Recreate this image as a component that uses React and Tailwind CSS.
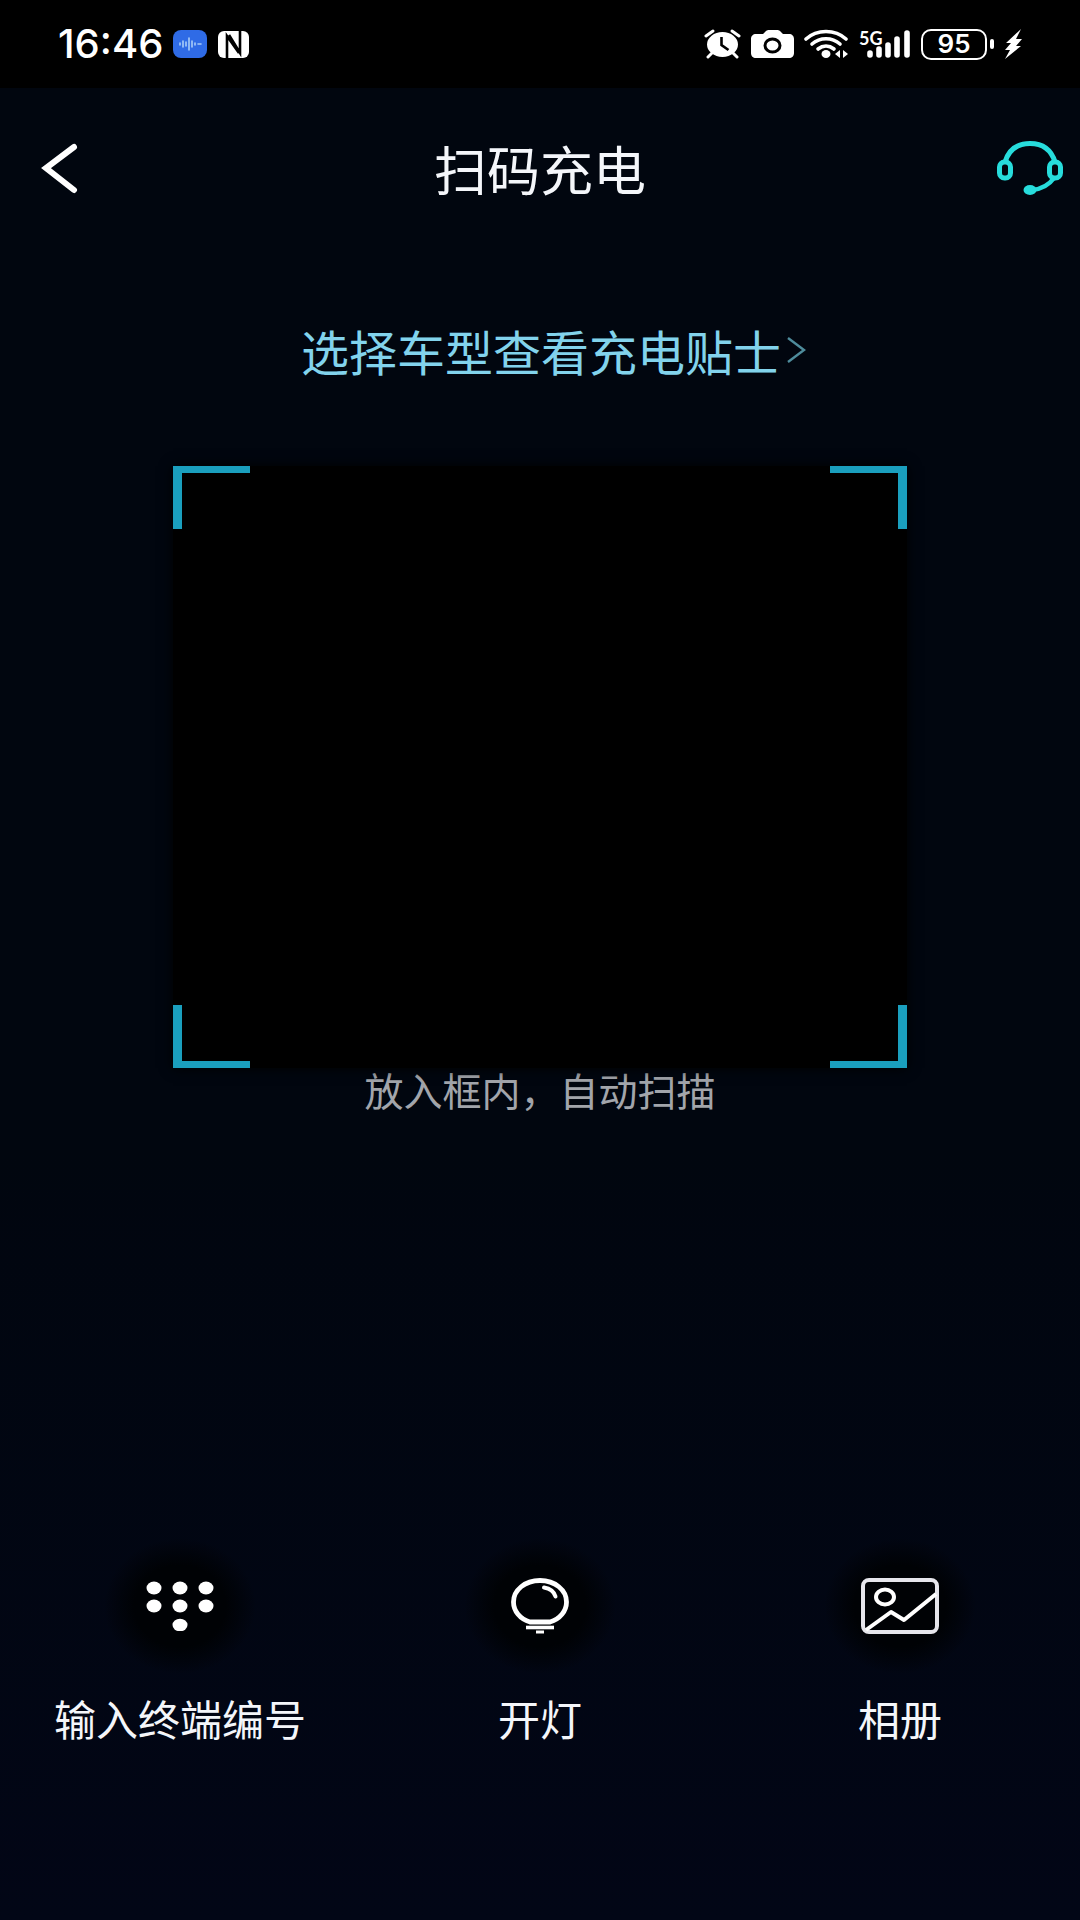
import React, { useState } from 'react';

const StatusBar = () => (
  <div className="flex h-[88px] items-center justify-between bg-black px-[58px] text-white">
    <div className="flex items-center gap-[10px]">
      <span className="font-['Inter',sans-serif] text-[40px] leading-[48px] font-medium">16:46</span>
      <svg width="34" height="28" viewBox="0 0 34 28" aria-hidden="true">
        <rect width="34" height="28" rx="8" fill="#2f6be6" />
        <g stroke="#a9cdf8" strokeWidth="1.6" strokeLinecap="round">
          <path d="M7 13v2M10 11v6M13 12v4M16 8v12M19 11v6M22 13v2M25 14h3" />
        </g>
      </svg>
      <svg width="33" height="29" viewBox="0 0 33 29" aria-hidden="true">
        <rect x="1" y="1" width="31" height="27" rx="6" fill="#fff" />
        <g fill="none" stroke="#000">
          <path d="M10 29V6l12 17" strokeWidth="2.6" />
          <path d="M23 0v23L12 5" strokeWidth="2.6" />
        </g>
      </svg>
    </div>

    <div className="flex items-center gap-[10px]">
      <svg width="37" height="30" viewBox="0 0 37 30" aria-hidden="true">
        <ellipse cx="18.5" cy="15.5" rx="15.5" ry="12.5" fill="#fff" />
        <path d="M2 7l7-5M35 7l-7-5M8 24l-4 4M29 24l4 4" stroke="#fff" strokeWidth="3" strokeLinecap="round" />
        <path d="M17.5 8v8l7 5" fill="none" stroke="#000" strokeWidth="2.6" />
      </svg>
      <svg width="43" height="28" viewBox="0 0 43 28" aria-hidden="true">
        <path
          fill="#fff"
          d="M5 4h7l3-3c1-1 2-1 3-1h8c1 0 2 0 3 1l3 3h6c3 0 5 2 5 5v14c0 3-2 5-5 5H5c-3 0-5-2-5-5V9c0-3 2-5 5-5z"
        />
        <ellipse cx="21.5" cy="15.5" rx="7.5" ry="6.5" fill="none" stroke="#000" strokeWidth="3" />
      </svg>
      <svg width="45" height="30" viewBox="0 0 45 30" aria-hidden="true">
        <g fill="none" stroke="#fff" strokeWidth="3.6" strokeLinecap="round">
          <path d="M2 10C13 0 31 0 42 10" />
          <path d="M8 15c8-7 20-7 28 0" />
          <path d="M14 20c5-4 11-4 16 0" />
        </g>
        <ellipse cx="22" cy="25" rx="4.5" ry="4" fill="#fff" />
        <path d="M31 25l5-4v8zM44 25l-5-4v8z" fill="#fff" />
      </svg>
      <div className="relative">
        <svg width="52" height="30" viewBox="0 0 52 30" aria-hidden="true">
          <g stroke="#fff" strokeWidth="5.6" strokeLinecap="round">
            <path d="M11 24v2M20 20v6M29 16v10M38 10v16M48 4v22" />
          </g>
        </svg>
        <span className="absolute top-0 left-0 font-['Lato',sans-serif] text-[18px] leading-[18px] font-bold">5G</span>
      </div>
      <div className="flex items-center gap-[3px]">
        <span className="flex h-[31px] w-[66px] items-center justify-center rounded-[10px] border-2 border-white font-['Inter',sans-serif] text-[26px] leading-[26px] font-semibold">
          95
        </span>
        <span className="h-[10px] w-[4px] rounded-sm bg-white" />
      </div>
      <svg width="18" height="30" viewBox="0 0 18 30" aria-hidden="true">
        <path d="M17 0L2 14h5l-6 7h5L1 30l16-13h-5l6-7h-6z" fill="#fff" />
      </svg>
    </div>
  </div>
);

const Corner = ({ className }) => (
  <span className={`absolute h-[63px] w-[77px] border-[#1a9fbe] ${className}`} />
);

const KeypadIcon = () => (
  <svg width="68" height="50" viewBox="0 0 68 50" fill="#fff" aria-hidden="true">
    {[8, 34, 60].map((x) => (
      <React.Fragment key={x}>
        <ellipse cx={x} cy="7" rx="7.5" ry="6.5" />
        <ellipse cx={x} cy="25" rx="7.5" ry="6.5" />
      </React.Fragment>
    ))}
    <ellipse cx="34" cy="44" rx="7.5" ry="6.3" />
  </svg>
);

const BulbIcon = () => (
  <svg width="58" height="56" viewBox="0 0 58 56" fill="none" stroke="#fff" aria-hidden="true">
    <path
      d="M19 44C9 41 2.5 33 2.5 24 2.5 12 14 2.5 29 2.5S55.500 12 55.500 24C55.500 33 49 41 39 44z"
      strokeWidth="4.8"
    />
    <path d="M33 9.500c6 1 10 4 11.500 9" strokeWidth="4" strokeLinecap="round" />
    <path d="M15 49.500h28" strokeWidth="3.6" />
    <path d="M25 54h8" strokeWidth="3" />
  </svg>
);

const AlbumIcon = () => (
  <svg width="78" height="56" viewBox="0 0 78 56" fill="none" stroke="#fff" strokeWidth="4" aria-hidden="true">
    <rect x="2" y="2" width="74" height="52" rx="6" stroke="#e6e6ec" />
    <ellipse cx="24" cy="19" rx="9" ry="7.5" />
    <path d="M5 52l25-18 13 8 32-26" strokeLinejoin="round" />
  </svg>
);

const ActionButton = ({ icon, label, onClick }) => (
  <button type="button" onClick={onClick} className="flex flex-col items-center gap-4">
    <span className="flex h-[136px] w-[152px] items-center justify-center rounded-full bg-[radial-gradient(closest-side,#000205_60%,transparent)]">
      {icon}
    </span>
    <span className="text-[42px] leading-[56px] whitespace-nowrap">{label}</span>
  </button>
);

const App = () => {
  const [lightOn, setLightOn] = useState(false);

  return (
    <div className="flex min-h-screen flex-col bg-linear-to-b from-[#01060f] from-60% to-[#020616] font-['Noto_Sans_CJK_SC',sans-serif] text-[#f4f6fa]">
      <StatusBar />

      <header className="grid grid-cols-[1fr_auto_1fr] items-center px-4 pt-[44px]">
        <button type="button" aria-label="返回" className="justify-self-start pl-6">
          <svg width="40" height="56" viewBox="0 0 40 56" fill="none" aria-hidden="true">
            <path d="M34 7L6 28l28 22" stroke="#fff" strokeWidth="6" strokeLinecap="round" />
          </svg>
        </button>
        <h1 className="text-[53px] leading-[72px]">扫码充电</h1>
        <button type="button" aria-label="客服" className="justify-self-end">
          <svg width="68" height="56" viewBox="0 0 68 56" fill="none" stroke="#27dcdc" aria-hidden="true">
            <path d="M9 22C13 9 22 3.500 34 3.500s21 5.500 25 18.500" strokeWidth="5" />
            <rect x="3.5" y="22" width="11" height="16" rx="5" strokeWidth="5" />
            <rect x="53.5" y="22" width="11" height="16" rx="5" strokeWidth="5" />
            <path d="M58 38c-5 7-12 11-22 12" strokeWidth="4.5" />
            <ellipse cx="34" cy="50" rx="6.5" ry="5" fill="#27dcdc" stroke="none" />
          </svg>
        </button>
      </header>

      <a href="#tips" className="mt-[114px] flex items-center gap-1 self-center pl-7 text-[#82d3ec]">
        <span className="text-[48px] leading-[64px]">选择车型查看充电贴士</span>
        <svg width="22" height="30" viewBox="0 0 22 30" fill="none" aria-hidden="true">
          <path d="M3 3l16 12L3 27" stroke="#4e8c9c" strokeWidth="2.4" />
        </svg>
      </a>

      <main className="mt-[84px] flex flex-col items-center">
        <div className="relative h-[602px] w-[68%] bg-black shadow-[0_0_12px_#000]">
          <Corner className="top-0 left-0 border-t-[7px] border-l-[9px]" />
          <Corner className="top-0 right-0 border-t-[7px] border-r-[9px]" />
          <Corner className="bottom-0 left-0 border-b-[7px] border-l-[9px]" />
          <Corner className="right-0 bottom-0 border-r-[9px] border-b-[7px]" />
        </div>
        <p className="text-[39px] leading-[42px] text-[#a2a5ab]">放入框内，自动扫描</p>
      </main>

      <nav className="mt-auto grid grid-cols-3 pb-[174px]">
        <ActionButton icon={<KeypadIcon />} label="输入终端编号" />
        <ActionButton icon={<BulbIcon />} label={lightOn ? '关灯' : '开灯'} onClick={() => setLightOn(!lightOn)} />
        <ActionButton icon={<AlbumIcon />} label="相册" />
      </nav>
    </div>
  );
};

export default App;
